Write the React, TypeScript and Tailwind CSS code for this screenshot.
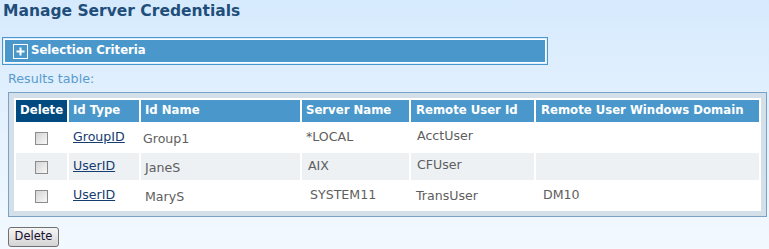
const rows = [
  { idType: "GroupID", idName: "Group1", server: "*LOCAL", remote: "AcctUser", domain: "" },
  { idType: "UserID", idName: "JaneS", server: "AIX", remote: "CFUser", domain: "" },
  { idType: "UserID", idName: "MaryS", server: "SYSTEM11", remote: "TransUser", domain: "DM10" },
];

function Checkbox() {
  return (
    <span className="inline-block w-[13px] h-[13px] border border-[#8c8c8c] bg-gradient-to-br from-[#d4d4d4] to-[#f8f8f8] align-middle" />
  );
}

export default function App() {
  return (
    <div className="min-h-screen w-full bg-gradient-to-b from-[#d6eafd] to-[#f3f9ff] font-['DejaVu_Sans',Verdana,sans-serif] pt-[2px]">
      <h1 className="pl-[3px] text-[15.5px] leading-[19px] font-bold text-[#1f4e7a]">
        Manage Server Credentials
      </h1>

      <div className="ml-[2px] mt-[16px] w-[546px] h-[28px] border border-[#4a98cb] p-px">
        <div className="h-full border border-white bg-[#4a98cb] flex items-center pl-[8px] gap-[3px]">
          <span className="shrink-0 w-[15px] h-[15px] border border-white flex items-center justify-center">
            <svg width="9" height="9" viewBox="0 0 9 9" className="block">
              <path d="M4.5 0.5v8M0.5 4.5h8" stroke="white" strokeWidth="2" />
            </svg>
          </span>
          <span className="text-[11.7px] font-bold text-white leading-none">Selection Criteria</span>
        </div>
      </div>

      <p className="ml-[8px] mt-[6px] text-[12.7px] leading-[16px] text-[#5a9bcd]">Results table:</p>

      <div className="ml-[8px] mt-[5px] w-[759px] border border-[#7aa2c4] bg-[#d3e0ea] p-[5px]">
        <table className="bg-white border-separate border-spacing-[2px] table-fixed w-full text-[12.6px]">
          <colgroup>
            <col className="w-[51px]" />
            <col className="w-[70px]" />
            <col className="w-[159px]" />
            <col className="w-[107px]" />
            <col className="w-[123px]" />
            <col />
          </colgroup>
          <thead>
            <tr className="h-[22px] text-[11.7px] font-bold text-white text-left">
              <th className="bg-[#004a80] px-[4px] font-bold">Delete</th>
              <th className="bg-[#4a98cb] pl-[4px] font-bold">Id Type</th>
              <th className="bg-[#4a98cb] pl-[4px] font-bold">Id Name</th>
              <th className="bg-[#4a98cb] pl-[4px] font-bold">Server Name</th>
              <th className="bg-[#4a98cb] pl-[5px] font-bold">Remote User Id</th>
              <th className="bg-[#4a98cb] pl-[5px] font-bold">Remote User Windows Domain</th>
            </tr>
          </thead>
          <tbody>
            {rows.map((r, i) => (
              <tr key={i} className={i === 1 ? "h-[27px] bg-[#edf1f4]" : "h-[27px]"}>
                <td className="text-center pt-[1px]">
                  <Checkbox />
                </td>
                <td className="pl-[4px] pb-[1px]">
                  <a href="#" className="text-[#173c70] underline">{r.idType}</a>
                </td>
                <td className={i === 0 ? "pl-[2px] pt-[3px] text-[#5e5e5e]" : "pl-[4px] pt-[4px] text-[#5e5e5e]"}>
                  {r.idName}
                </td>
                <td className={i === 0 ? "pl-[4px] pb-[1px] text-[#5e5e5e]" : i === 1 ? "pl-[6px] pb-[1px] text-[#5e5e5e]" : "pl-[8px] text-[#5e5e5e]"}>
                  {r.server}
                </td>
                <td className={i === 2 ? "pl-[5px] pt-[2px] text-[#5e5e5e]" : "pl-[6px] pb-[2px] text-[#5e5e5e]"}>
                  {r.remote}
                </td>
                <td className="pl-[7px] text-[#5e5e5e]">{r.domain}</td>
              </tr>
            ))}
          </tbody>
        </table>
      </div>

      <button className="ml-[8px] mt-[10px] w-[51px] h-[20px] border border-[#707070] rounded-[3px] bg-gradient-to-b from-[#f5f5f5] to-[#d4d4d4] text-[11.5px] leading-none text-[#1a1030] font-['DejaVu_Sans',Tahoma,sans-serif]">
        Delete
      </button>
    </div>
  );
}
